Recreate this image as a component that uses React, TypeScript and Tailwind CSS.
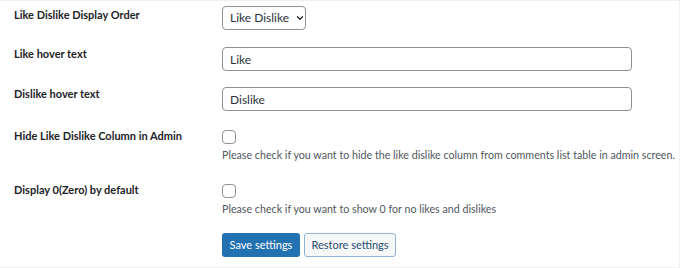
import { ChevronDown } from "lucide-react";

const font = { fontFamily: "Lato, 'Noto Sans', sans-serif" };

function Label({ children, pad }: { children: React.ReactNode; pad: string }) {
  return <div className={`w-[208px] shrink-0 text-[11px] font-bold leading-4 text-[#1d2327] ${pad}`}>{children}</div>;
}

export default function App() {
  return (
    <div style={font} className="h-[268px] w-[680px] overflow-hidden border-t border-b border-r border-[#f0f0f1] bg-white pl-[14px] pt-[5px]">
      <div className="flex">
        <Label pad="pt-[1px]">Like Dislike Display Order</Label>
        <div className="flex h-[24px] w-[84px] items-center gap-[6px] whitespace-nowrap rounded-[4px] border border-[#8c8f94] pl-[7px] text-[12px] text-[#2c3338]">
          <span>Like Dislike</span>
          <ChevronDown size={10} strokeWidth={3} className="text-[#1d2327]" />
        </div>
      </div>

      <div className="mt-[17px] flex">
        <Label pad="-mt-[1px]">Like hover text</Label>
        <input readOnly value="Like" className="h-[24px] w-[410px] rounded-[4px] border border-[#8c8f94] px-[7px] text-[12px] text-[#2c3338] outline-none" />
      </div>

      <div className="mt-[16px] flex">
        <Label pad="-mt-[1px]">Dislike hover text</Label>
        <input readOnly value="Dislike" className="h-[24px] w-[410px] rounded-[4px] border border-[#8c8f94] px-[7px] text-[12px] text-[#2c3338] outline-none" />
      </div>

      <div className="mt-[19px] flex">
        <Label pad="-mt-[2px]">Hide Like Dislike Column in Admin</Label>
        <div>
          <div className="h-[14px] w-[14px] rounded-[4px] border border-[#8c8f94]" />
          <p className="mt-[3px] whitespace-nowrap text-[10.7px] leading-4 text-[#50575e]">
            Please check if you want to hide the like dislike column from comments list table in admin screen.
          </p>
        </div>
      </div>

      <div className="mt-[21px] flex">
        <Label pad="-mt-[2px]">Display 0(Zero) by default</Label>
        <div>
          <div className="h-[14px] w-[14px] rounded-[4px] border border-[#8c8f94]" />
          <p className="mt-[3px] whitespace-nowrap text-[10.7px] leading-4 text-[#50575e]">
            Please check if you want to show 0 for no likes and dislikes
          </p>
        </div>
      </div>

      <div className="ml-[208px] mt-[16px] flex gap-[4px]">
        <button className="h-[24px] w-[78px] whitespace-nowrap rounded-[3px] bg-[#2271b1] text-[11px] text-white">Save settings</button>
        <button className="h-[24px] w-[92px] whitespace-nowrap rounded-[3px] border border-[#8fb4d6] bg-[#f6f7f7] text-[11px] text-[#2a4d74]">Restore settings</button>
      </div>
    </div>
  );
}
